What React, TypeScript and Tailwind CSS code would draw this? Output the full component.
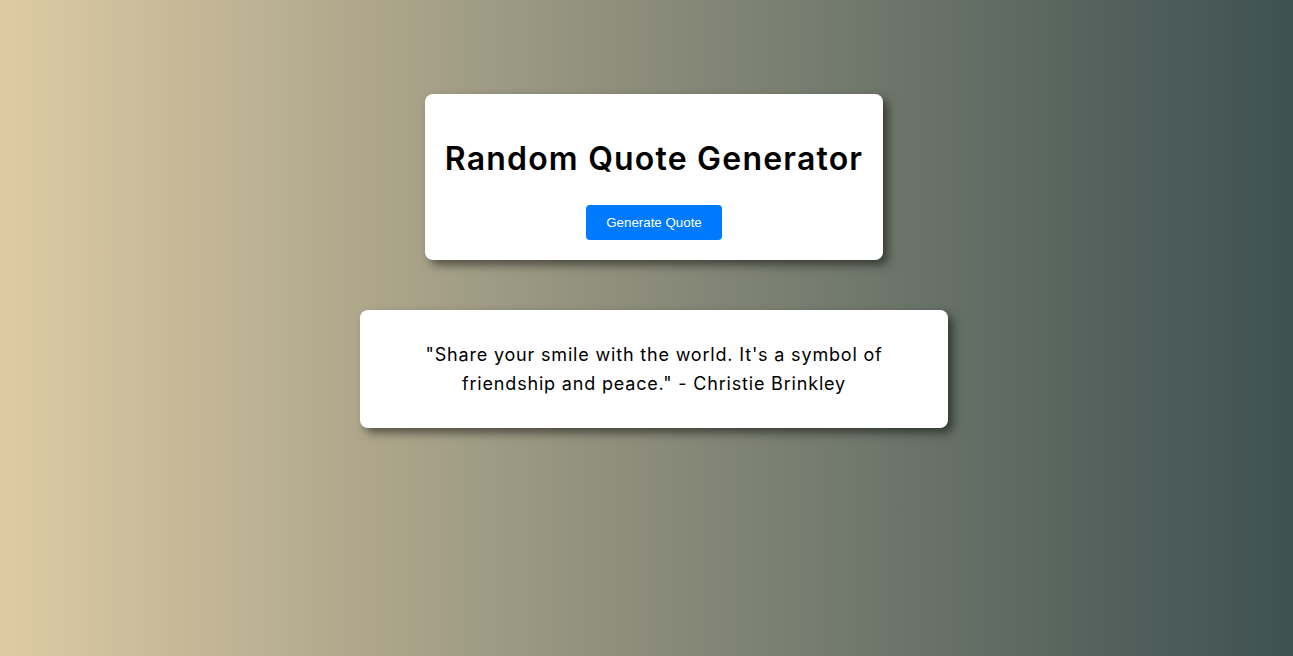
const App = () => {
  return (
    <div className="min-h-screen w-full bg-gradient-to-r from-[#decba4] to-[#3e5151] font-['Inter','Noto_Sans',sans-serif] text-black">
      <div className="flex flex-col items-center pt-[94px] pl-[15px]">
        {/* 标题卡片 */}
        <div className="rounded-lg bg-white p-5 text-center shadow-[5px_5px_10px_rgba(0,0,0,0.5)]">
          <h1 className="mt-[21px] mb-[22px] text-[32px] leading-[48px] font-semibold tracking-[1.2px]">Random Quote Generator</h1>
          <button className="rounded bg-[#007bff] px-5 py-[10px] font-['Liberation_Sans',Arial,sans-serif] text-[13.33px] leading-[15px] text-white">
            Generate Quote
          </button>
        </div>

        {/* 名言卡片 */}
        <div className="mt-[50px] w-[588px] rounded-lg bg-white px-[30px] py-[30px] text-center shadow-[5px_5px_10px_rgba(0,0,0,0.5)]">
          <p className="text-[18px] leading-[29px] tracking-[0.82px]">
            "Share your smile with the world. It's a symbol of friendship and peace." - Christie Brinkley
          </p>
        </div>
      </div>
    </div>
  );
};

export default App;
